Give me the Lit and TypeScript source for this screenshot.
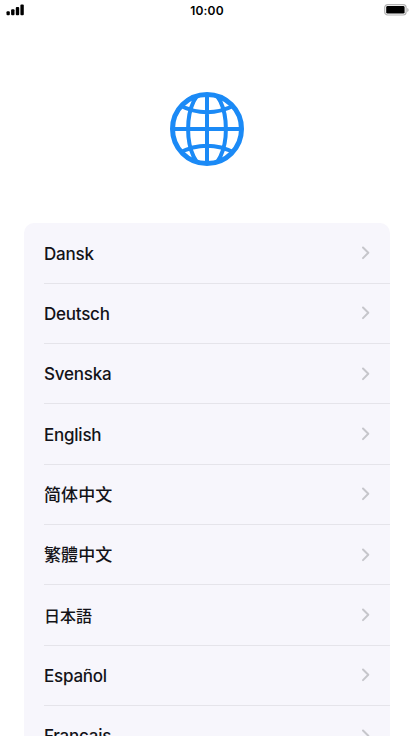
import { LitElement, html, css } from "lit";
import { customElement } from "lit/decorators.js";

const languages: { name: string; lang: string }[] = [
  { name: "Dansk", lang: "da" },
  { name: "Deutsch", lang: "de" },
  { name: "Svenska", lang: "sv" },
  { name: "English", lang: "en" },
  { name: "简体中文", lang: "zh-Hans" },
  { name: "繁體中文", lang: "zh-Hant" },
  { name: "日本語", lang: "ja" },
  { name: "Español", lang: "es" },
  { name: "Français", lang: "fr" },
];

@customElement("app-root")
export class AppRoot extends LitElement {
  static styles = css`
    :host { display: flex; flex-direction: column; height: 736px; overflow: hidden; background: #fff; color: #131318; font-family: Inter, "Noto Sans CJK SC", sans-serif; }
    .status { display: grid; grid-template-columns: 1fr auto 1fr; height: 20px; flex: none; align-items: center; padding: 0 5px 0 6px; box-sizing: border-box; }
    .time { font-size: 12px; font-weight: 600; letter-spacing: 0.2px; color: #000; margin-right: 1px; }
    .status svg { display: block; }
    .battery { justify-self: end; }
    .hero { height: 203px; flex: none; display: flex; justify-content: center; box-sizing: border-box; padding-top: 71px; }
    .list { margin: 0 24px; flex: none; background: #f7f6fc; border-radius: 10px 10px 0 0; padding: 0.4px 0 0 20px; }
    .row { height: 60.34px; box-sizing: border-box; display: flex; align-items: center; justify-content: space-between; padding-right: 20px; border-bottom: 1px solid #e5e4ea; font-size: 17px; font-weight: 500; letter-spacing: -0.23px; }
    .name { line-height: 20px; padding-top: 1px; }
    .row:lang(zh) { letter-spacing: 0.1px; }
    .row:lang(zh-Hant) { font-family: Inter, "Noto Sans CJK TC", sans-serif; }
    .row:lang(ja) { font-family: Inter, "Noto Sans CJK JP", sans-serif; font-size: 16px; letter-spacing: 0; }
  `;

  render() {
    return html`
      <div class="status">
        <svg width="18" height="12" viewBox="0 0 18 12"><rect x="0.5" y="7.3" width="3.3" height="4" rx="1"/><rect x="5.1" y="5.3" width="3.4" height="6" rx="1"/><rect x="9.8" y="3" width="3.4" height="8.3" rx="1"/><rect x="14.4" y="0.4" width="3.4" height="10.9" rx="1"/></svg>
        <span class="time">10:00</span>
        <svg class="battery" width="25" height="12" viewBox="0 0 25 12"><rect x="0.7" y="0.6" width="21.4" height="10.4" rx="3" fill="none" stroke="#b3b3b3" stroke-width="1.2"/><rect x="2.2" y="2" width="18.4" height="7.6" rx="1.4"/><path d="M23.3 4v4q1.3-.5 1.3-2T23.3 4" fill="#aaa"/></svg>
      </div>
      <div class="hero">
        <svg width="76" height="76" viewBox="0 0 76 76" fill="none" stroke="#1b8af6" stroke-width="4">
          <clipPath id="disc"><circle cx="38" cy="38" r="35"/></clipPath>
          <circle cx="38" cy="38" r="34.5" stroke-width="5"/>
          <g clip-path="url(#disc)"><ellipse cx="38" cy="38" rx="18.9" ry="39"/><path d="M38 3v70M3 38h70M10 14q28 14.5 56 0M10 62q28-14.5 56 0"/></g>
        </svg>
      </div>
      <div class="list">
        ${languages.map((l) => html`<div class="row" lang=${l.lang}><span class="name">${l.name}</span><svg width="9" height="14" viewBox="0 0 9 14" fill="none" stroke="#c6c6cb" stroke-width="2" stroke-linecap="round" stroke-linejoin="round"><path d="M2 1.5L7.3 6.8L2 12.1"/></svg></div>`)}
      </div>
    `;
  }
}
